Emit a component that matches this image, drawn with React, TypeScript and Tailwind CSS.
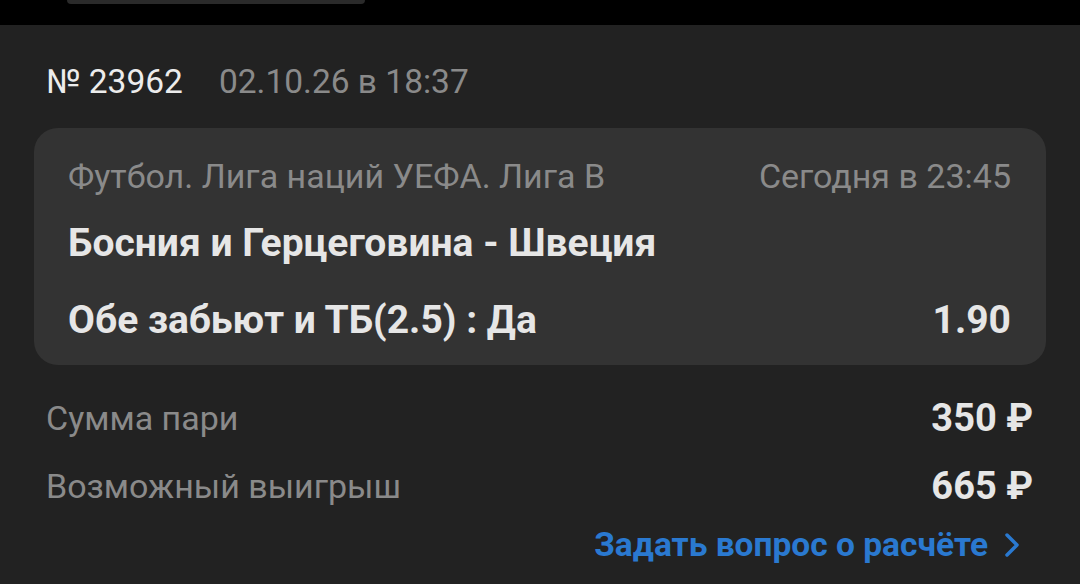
const font = { fontFamily: 'Roboto, "Noto Sans", sans-serif' };

function SummaryRow({ label, value }: { label: string; value: string }) {
  return (
    <div className="flex items-center justify-between h-[40px]">
      <span className="text-[34px] text-[#8a8a8a]">{label}</span>
      <span className="text-[38px] font-bold text-[#e6e6e6]">{value}</span>
    </div>
  );
}

export default function App() {
  return (
    <div className="w-[1080px] h-[584px] bg-black flex flex-col overflow-hidden leading-[40px]" style={font}>
      {/* status bar with the edge of the floating pill */}
      <div className="h-[25px] shrink-0">
        <div className="ml-[67px] w-[298px] h-[4px] rounded-b-[10px] bg-[#2a2a2a]" />
      </div>

      <div className="flex-1 bg-[#222222] flex flex-col">
        <div className="flex items-center gap-[36px] px-[46px] pt-[37px] h-[77px]">
          <span className="text-[33.5px] text-[#ececec]">№ 23962</span>
          <span className="text-[33.5px] text-[#8a8a8a]">02.10.26 в 18:37</span>
        </div>

        <div className="mx-[34px] mt-[26px] rounded-[24px] bg-[#333333] pl-[34px] pr-[35px] pt-[28px] pb-[25px]">
          <div className="flex items-center justify-between h-[40px]">
            <span className="text-[34px] text-[#8a8a8a]">Футбол. Лига наций УЕФА. Лига В</span>
            <span className="text-[34px] text-[#8a8a8a]">Сегодня в 23:45</span>
          </div>
          <div className="mt-[27px] h-[40px] flex items-center text-[39px] font-bold text-[#e6e6e6]">
            Босния и Герцеговина - Швеция
          </div>
          <div className="mt-[37px] flex items-center justify-between h-[40px] text-[39px] font-bold text-[#e6e6e6]">
            <span>Обе забьют и ТБ(2.5) : Да</span>
            <span>1.90</span>
          </div>
        </div>

        <div className="px-[46px] pr-[47px] mt-[33px] flex flex-col gap-[28px]">
          <SummaryRow label="Сумма пари" value="350 ₽" />
          <SummaryRow label="Возможный выигрыш" value="665 ₽" />
        </div>

        <div className="mt-[19px] pr-[61px] flex items-center justify-end gap-[17px] text-[#2a79d0]">
          <span className="text-[33.5px] font-bold">Задать вопрос о расчёте</span>
          <svg width="14" height="24" viewBox="0 0 14 24" fill="none" stroke="currentColor" strokeWidth="3.5" strokeLinecap="round" strokeLinejoin="round">
            <polyline points="2,2 12,12 2,22" />
          </svg>
        </div>
      </div>
    </div>
  );
}
